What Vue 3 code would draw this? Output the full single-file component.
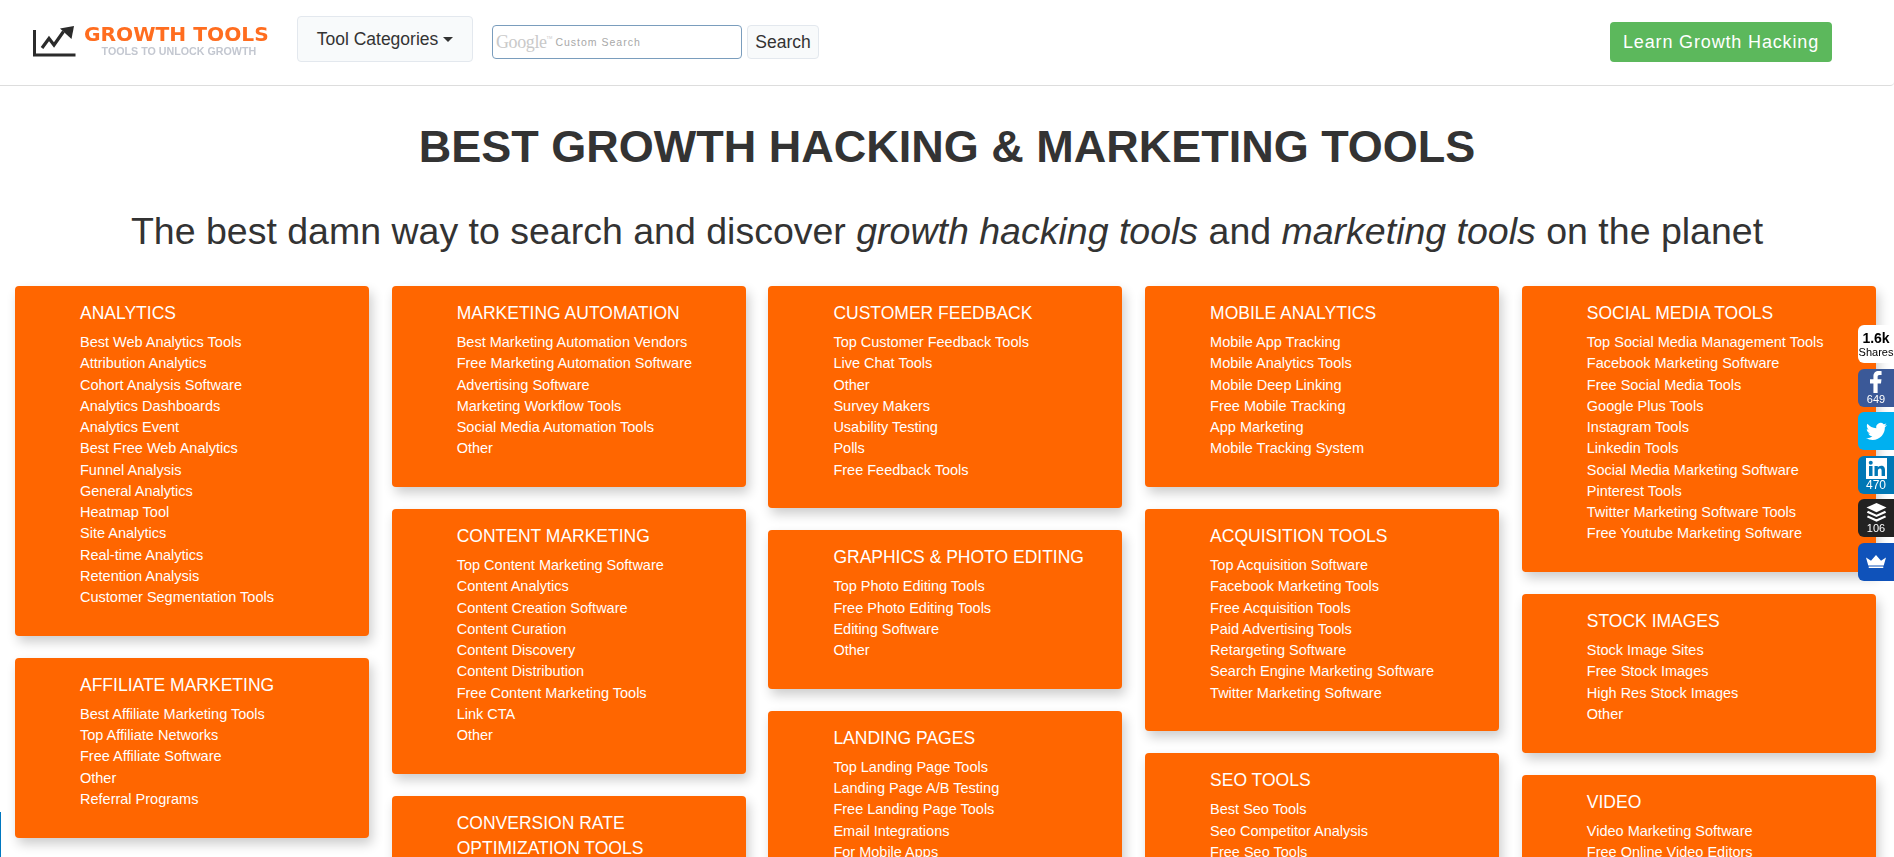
<template>
  <div class="page">
    <!-- top navbar -->
    <header class="navbar">
      <a class="brand" href="#">
        <svg class="brand-chart" width="44" height="32" viewBox="0 0 44 32">
          <path d="M1.5 5v25h41" fill="none" stroke="#2b2b2b" stroke-width="3" />
          <path d="M9 23l7-9.5 5 6.5 9.500-13.500" fill="none" stroke="#2b2b2b" stroke-width="3.200" />
          <path d="M27 3.500L41 1l-2.500 13z" fill="#2b2b2b" />
        </svg>
        <span class="brand-text">
          <span class="brand-name">GROWTH TOOLS</span>
          <span class="brand-sub">TOOLS TO UNLOCK GROWTH</span>
        </span>
      </a>
      <button class="cat-btn">Tool Categories<span class="caret"></span></button>
      <div class="search-box">
        <span class="g-logo">Google<sup>TM</sup></span>
        <span class="g-text">Custom Search</span>
      </div>
      <button class="search-btn">Search</button>
      <a class="learn-btn" href="#">Learn Growth Hacking</a>
    </header>

    <h1 class="title">BEST GROWTH HACKING &amp; MARKETING TOOLS</h1>
    <h2 class="subtitle">The best damn way to search and discover <em>growth hacking tools</em> and <em>marketing tools</em> on the planet</h2>

    <!-- category cards -->
    <main class="columns">
      <div v-for="(col, i) in columns" :key="i" class="column">
        <section v-for="card in col" :key="card.title" class="card">
          <h3>{{ card.title }}</h3>
          <a v-for="link in card.links" :key="link" href="#">{{ link }}</a>
        </section>
      </div>
    </main>

    <!-- floating share bar -->
    <aside class="share">
      <div class="share-item total"><b>1.6k</b><span>Shares</span></div>
      <div class="share-item fb">
        <svg width="12" height="22" viewBox="0 0 14 24" preserveAspectRatio="none"><path fill="#fff" d="M4 24V13.500H0V9h4V6c0-4 2.500-6 6-6 1.700 0 3 .1 3.500.2v4.100h-2.400C9.200 4.300 8.900 5.200 8.900 6.500V9h4.500l-.6 4.500H8.900V24z" /></svg>
        <span>649</span>
      </div>
      <div class="share-item tw">
        <svg width="21" height="21" viewBox="0 0 24 24"><path fill="#fff" d="M23.953 4.570a10 10 0 01-2.825.775 4.958 4.958 0 002.163-2.723c-.951.555-2.005.959-3.127 1.184a4.920 4.920 0 00-8.384 4.482C7.690 8.095 4.067 6.130 1.640 3.162a4.822 4.822 0 00-.665 2.475c0 1.710.870 3.213 2.188 4.096a4.904 4.904 0 01-2.228-.616v.060a4.923 4.923 0 003.946 4.827 4.996 4.996 0 01-2.212.085 4.936 4.936 0 004.604 3.417 9.867 9.867 0 01-6.102 2.105c-.390 0-.779-.023-1.170-.067a13.995 13.995 0 007.557 2.209c9.053 0 13.998-7.496 13.998-13.985 0-.210 0-.420-.015-.630A9.935 9.935 0 0024 4.590z" /></svg>
      </div>
      <div class="share-item li">
        <svg width="21" height="21" viewBox="0 0 21 21">
          <rect width="21" height="21" fill="#fff" />
          <rect x="3" y="8" width="3.500" height="10" fill="#0077b5" />
          <circle cx="4.750" cy="4.700" r="2" fill="#0077b5" />
          <path fill="#0077b5" d="M8.500 8h3.300v1.500c.6-1 1.800-1.800 3.300-1.800 3 0 3.900 1.800 3.900 4.600V18h-3.400v-5.100c0-1.300-.3-2.300-1.600-2.300-1.400 0-2.100.9-2.100 2.400v5H8.500z" />
        </svg>
        <span>470</span>
      </div>
      <div class="share-item buf">
        <svg width="21" height="20" viewBox="0 0 22 24" preserveAspectRatio="none">
          <path fill="#fff" d="M11 0l10.500 5.500L11 11 .5 5.500z" />
          <path fill="none" stroke="#fff" stroke-width="2.400" d="M1.500 10.500L11 15.500l9.500-5M1.500 16L11 21l9.500-5" />
        </svg>
        <span>106</span>
      </div>
      <div class="share-item crown">
        <svg width="20" height="13" viewBox="0 0 22 16" preserveAspectRatio="none"><path fill="#fff" d="M0 3l5.500 4L11 0l5.500 7L22 3l-2.500 10h-17zM3 14h16v2H3z" /></svg>
      </div>
    </aside>

    <!-- sliver of a widget at the left edge -->
    <div class="edge"></div>
  </div>
</template>

<script setup>
const columns = [
  [
    { title: 'ANALYTICS', links: ['Best Web Analytics Tools', 'Attribution Analytics', 'Cohort Analysis Software', 'Analytics Dashboards', 'Analytics Event', 'Best Free Web Analytics', 'Funnel Analysis', 'General Analytics', 'Heatmap Tool', 'Site Analytics', 'Real-time Analytics', 'Retention Analysis', 'Customer Segmentation Tools'] },
    { title: 'AFFILIATE MARKETING', links: ['Best Affiliate Marketing Tools', 'Top Affiliate Networks', 'Free Affiliate Software', 'Other', 'Referral Programs'] },
  ],
  [
    { title: 'MARKETING AUTOMATION', links: ['Best Marketing Automation Vendors', 'Free Marketing Automation Software', 'Advertising Software', 'Marketing Workflow Tools', 'Social Media Automation Tools', 'Other'] },
    { title: 'CONTENT MARKETING', links: ['Top Content Marketing Software', 'Content Analytics', 'Content Creation Software', 'Content Curation', 'Content Discovery', 'Content Distribution', 'Free Content Marketing Tools', 'Link CTA', 'Other'] },
    { title: 'CONVERSION RATE OPTIMIZATION TOOLS', links: ['A/B Testing Tools'] },
  ],
  [
    { title: 'CUSTOMER FEEDBACK', links: ['Top Customer Feedback Tools', 'Live Chat Tools', 'Other', 'Survey Makers', 'Usability Testing', 'Polls', 'Free Feedback Tools'] },
    { title: 'GRAPHICS & PHOTO EDITING', links: ['Top Photo Editing Tools', 'Free Photo Editing Tools', 'Editing Software', 'Other'] },
    { title: 'LANDING PAGES', links: ['Top Landing Page Tools', 'Landing Page A/B Testing', 'Free Landing Page Tools', 'Email Integrations', 'For Mobile Apps', 'Other'] },
  ],
  [
    { title: 'MOBILE ANALYTICS', links: ['Mobile App Tracking', 'Mobile Analytics Tools', 'Mobile Deep Linking', 'Free Mobile Tracking', 'App Marketing', 'Mobile Tracking System'] },
    { title: 'ACQUISITION TOOLS', links: ['Top Acquisition Software', 'Facebook Marketing Tools', 'Free Acquisition Tools', 'Paid Advertising Tools', 'Retargeting Software', 'Search Engine Marketing Software', 'Twitter Marketing Software'] },
    { title: 'SEO TOOLS', links: ['Best Seo Tools', 'Seo Competitor Analysis', 'Free Seo Tools', 'Other'] },
  ],
  [
    { title: 'SOCIAL MEDIA TOOLS', links: ['Top Social Media Management Tools', 'Facebook Marketing Software', 'Free Social Media Tools', 'Google Plus Tools', 'Instagram Tools', 'Linkedin Tools', 'Social Media Marketing Software', 'Pinterest Tools', 'Twitter Marketing Software Tools', 'Free Youtube Marketing Software'] },
    { title: 'STOCK IMAGES', links: ['Stock Image Sites', 'Free Stock Images', 'High Res Stock Images', 'Other'] },
    { title: 'VIDEO', links: ['Video Marketing Software', 'Free Online Video Editors', 'Other'] },
  ],
]
</script>

<style>
html, body { margin: 0; height: 100%; overflow: hidden; background: #fff; }
</style>

<style scoped>
.page {
  height: 857px;
  overflow: hidden;
  font-family: "Liberation Sans", Arial, sans-serif;
  color: #333;
}

/* Navbar */
.navbar {
  height: 85px;
  box-sizing: content-box;
  display: flex;
  align-items: flex-start;
  border-bottom: 1px solid #ddd;
  border-bottom-right-radius: 4px;
}
.brand {
  display: flex;
  align-items: flex-start;
  width: 264px;
  margin-left: 33px;
  margin-top: 25px;
  text-decoration: none;
  filter: blur(0.3px);
}
.brand-text { display: flex; flex-direction: column; align-items: center; margin-left: 7px; margin-top: -1px; }
.brand-name {
  font-family: "DejaVu Sans", sans-serif;
  font-weight: 700;
  font-size: 20.2px;
  line-height: 20px;
  color: #ff6d1f;
  white-space: nowrap;
}
.brand-sub {
  font-weight: 700;
  font-size: 10.7px;
  line-height: 12px;
  margin-top: 1px;
  margin-left: 5px;
  color: #c3c7d0;
  white-space: nowrap;
}
.cat-btn {
  width: 176px;
  height: 46px;
  margin-top: 16px;
  padding: 0;
  font: 17.5px "Liberation Sans", Arial, sans-serif;
  color: #333;
  background: #f8fafb;
  border: 1px solid #e3e8ee;
  border-radius: 4px;
}
.caret {
  display: inline-block;
  margin-left: 5px;
  vertical-align: middle;
  border-top: 5px solid #333;
  border-left: 5px solid transparent;
  border-right: 5px solid transparent;
}
.search-box {
  width: 250px;
  height: 34px;
  box-sizing: border-box;
  margin: 25px 0 0 19px;
  padding-left: 3px;
  display: flex;
  align-items: center;
  background: #fff;
  border: 1px solid #7a9dbd;
  border-radius: 4px;
}
.g-logo { font-family: "Liberation Serif", serif; font-size: 18px; color: #c9c9c9; letter-spacing: -0.4px; }
.g-logo sup { font-family: "Liberation Sans", sans-serif; font-size: 4px; vertical-align: 9px; line-height: 0; letter-spacing: 0; }
.g-text { margin-left: 3px; font-size: 10.5px; letter-spacing: 1px; color: #a8a8a8; }
.search-btn {
  width: 72px;
  height: 34px;
  margin: 25px 0 0 5px;
  padding: 0;
  font: 17.5px "Liberation Sans", Arial, sans-serif;
  color: #333;
  background: #f8fafb;
  border: 1px solid #e3e8ee;
  border-radius: 4px;
}
.learn-btn {
  margin: 22px 62px 0 auto;
  width: 222px;
  height: 40px;
  line-height: 40px;
  text-align: center;
  font-size: 18px;
  letter-spacing: 0.85px;
  color: #fff;
  background: #5cb85c;
  border-radius: 4px;
  text-decoration: none;
}

/* Headings */
.title {
  margin: 37px 0 0;
  font-size: 45px;
  line-height: 48px;
  font-weight: 700;
  text-align: center;
}
.subtitle {
  margin: 40px 0 0;
  font-size: 37.5px;
  line-height: 40px;
  font-weight: 400;
  text-align: center;
}

/* Cards */
.columns {
  display: grid;
  grid-template-columns: repeat(5, 1fr);
  column-gap: 22.7px;
  padding: 0 18.2px 0 15px;
  margin-top: 35px;
}
.column { display: flex; flex-direction: column; gap: 22px; min-width: 0; }
.card {
  padding: 15px 20px 27.3px 65px;
  background: #ff6600;
  border-radius: 4px;
  box-shadow: 3px 6px 12px rgba(0, 0, 0, 0.2);
}
.card h3 {
  margin: 0 0 5.5px;
  font-size: 17.5px;
  line-height: 25.7px;
  font-weight: 400;
  color: #fff;
}
.card a {
  display: block;
  font-size: 14.5px;
  line-height: 21.25px;
  color: #fff;
  text-decoration: none;
}

/* Share bar */
.share {
  position: fixed;
  top: 325px;
  right: 0;
  width: 36px;
  display: flex;
  flex-direction: column;
}
.share-item {
  height: 38px;
  margin-bottom: 5.500px;
  box-sizing: border-box;
  display: flex;
  flex-direction: column;
  align-items: center;
  justify-content: center;
  border-radius: 6px 0 0 6px;
  color: #fff;
  font-size: 11px;
  line-height: 11px;
}
.total { background: #fff; color: #000; }
.total b { font-size: 14px; line-height: 15px; }
.total span { font-size: 11px; line-height: 12px; }
.fb { background: #3b5998; }
.fb svg { margin-bottom: 1px; }
.tw { background: #00b0f0; }
.li { background: #0077b5; }
.li span { font-size: 12px; margin-top: 1px; }
.buf { background: #222; }
.crown { background: #0f52ba; }

.edge {
  position: fixed;
  left: 0;
  top: 812px;
  bottom: 0;
  width: 1px;
  background: #0077c0;
}
</style>
